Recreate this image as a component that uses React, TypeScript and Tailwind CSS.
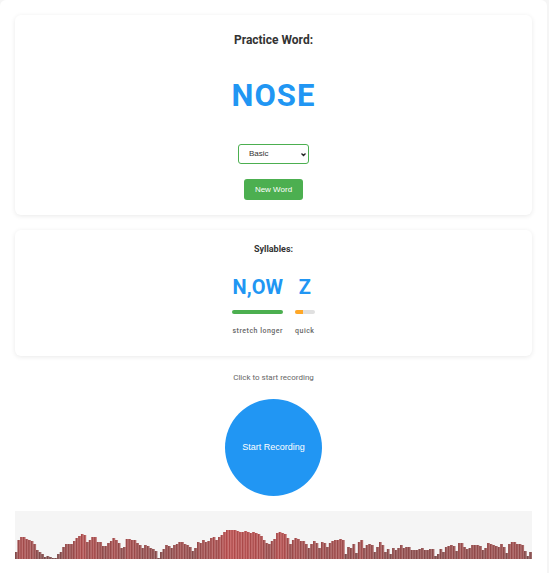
import { useState } from "react";

type Syllable = {
  text: string;
  hint: string;
  fill: string;
};

const LEVELS = ["Basic", "Intermediate", "Advanced"];

const SYLLABLES: Syllable[] = [
  { text: "N,OW", hint: "stretch longer", fill: "w-full bg-[#4caf50]" },
  { text: "Z", hint: "quick", fill: "w-2/5 bg-[#ffa726]" },
];

// Frequency levels, one per bar
const BARS = [
  7, 19, 22, 22, 20, 19, 18, 15, 9, 7, 5, 2, 3, 2, 1, 1, 5, 7, 12, 15, 15, 15, 18, 21, 23,
  25, 24, 17, 19, 22, 22, 17, 17, 13, 13, 16, 18, 21, 19, 16, 11, 12, 20, 20, 19, 19, 16,
  14, 11, 14, 13, 11, 10, 8, 1, 7, 10, 14, 13, 11, 14, 15, 17, 17, 15, 14, 12, 8, 11, 17,
  16, 19, 17, 18, 21, 22, 19, 22, 24, 27, 29, 29, 29, 29, 28, 27, 27, 28, 27, 26, 27, 26,
  25, 23, 19, 16, 15, 18, 20, 26, 27, 26, 25, 21, 15, 19, 21, 20, 18, 18, 15, 11, 15, 18,
  16, 11, 17, 16, 12, 16, 18, 19, 19, 20, 19, 5, 12, 11, 15, 6, 17, 19, 11, 14, 15, 14, 7,
  12, 17, 14, 7, 10, 5, 11, 9, 11, 14, 11, 12, 12, 9, 9, 9, 10, 11, 9, 9, 10, 10, 3, 5, 10,
  7, 12, 13, 14, 13, 8, 16, 16, 12, 10, 11, 14, 14, 14, 13, 9, 11, 16, 15, 14, 13, 12, 15,
  12, 6, 15, 17, 17, 15, 15, 14, 8, 3, 7,
];

const CARD = "flex flex-col items-center rounded-md bg-white shadow-[0_1px_5px_rgba(0,0,0,0.09)]";

const Waveform = () => (
  <svg
    className="block h-12 w-full bg-[#f5f5f5]"
    viewBox={`0 0 ${BARS.length * 4} 48`}
    preserveAspectRatio="none"
    role="img"
    aria-label="Audio level"
  >
    {BARS.map((h, i) => {
      const red = 130 + h * 2;
      return (
        <g key={i}>
          <rect x={i * 4} y={48 - h} width="4" height={h} fill={`rgb(${red + 15}, 108, 108)`} />
          <rect x={i * 4} y={48 - h} width="2" height={h} fill={`rgb(${red - 14}, 74, 74)`} />
        </g>
      );
    })}
  </svg>
);

const App = () => {
  const [level, setLevel] = useState("Basic");
  const [recording, setRecording] = useState(false);

  return (
    <div className="bg-[#f5f5f5] pr-0.5 font-['Roboto',sans-serif] text-[#333]">
      <main className="flex flex-col rounded-t-md bg-white px-[15px] pt-[15px] pb-3.5">
        <section className={`${CARD} pt-[17px] pb-[15px]`}>
          <h1 className="text-[12px] leading-4 font-bold">Practice Word:</h1>
          <p className="mt-7 text-[31px] leading-10 font-bold tracking-[1px] text-[#2196f3]">NOSE</p>

          <div className="relative mt-7">
            <select
              aria-label="Difficulty"
              value={level}
              onChange={(e) => setLevel(e.target.value)}
              className="block h-5 w-[71px] appearance-none rounded-[3px] border border-[#4caf50] bg-white pl-2.5 font-['Liberation_Sans',sans-serif] text-[8px]"
            >
              {LEVELS.map((l) => (
                <option key={l}>{l}</option>
              ))}
            </select>
            <svg
              className="pointer-events-none absolute inset-y-0 right-[3px] my-auto size-[5px]"
              viewBox="0 0 10 10"
              fill="none"
              stroke="#222"
              strokeWidth="2.6"
            >
              <path d="M1 3l4 4 4-4" />
            </svg>
          </div>

          <button
            type="button"
            className="mt-[15px] h-[21px] rounded-[3px] bg-[#4caf50] px-[11px] font-['Liberation_Sans',sans-serif] text-[8px] text-white"
          >
            New Word
          </button>
        </section>

        <section className={`${CARD} mt-[15px] pt-3 pb-5`}>
          <h2 className="text-[9px] leading-3.5 font-bold">Syllables:</h2>
          <div className="mt-5 flex gap-3">
            {SYLLABLES.map((s) => (
              <div key={s.text} className="flex flex-col items-center">
                <span className="text-[20px] leading-[22px] font-bold text-[#2196f3]">{s.text}</span>
                <div className="mt-3 h-1 w-full overflow-hidden rounded-full bg-[#e0e0e0]">
                  <div className={`h-full ${s.fill}`} />
                </div>
                <span className="mt-3 text-[7px] leading-2.5 font-medium tracking-[0.5px] text-[#666]">{s.hint}</span>
              </div>
            ))}
          </div>
        </section>

        <p className="mt-4 text-center text-[8px] leading-3 text-[#666]">
          {recording ? "Recording..." : "Click to start recording"}
        </p>

        <button
          type="button"
          onClick={() => setRecording(!recording)}
          className="mx-auto mt-[15px] size-[97px] rounded-full bg-[#2196f3] font-['Liberation_Sans',sans-serif] text-[9px] text-white"
        >
          {recording ? "Stop Recording" : "Start Recording"}
        </button>

        <div className="mt-[15px]">
          <Waveform />
        </div>
      </main>
    </div>
  );
};

export default App;
